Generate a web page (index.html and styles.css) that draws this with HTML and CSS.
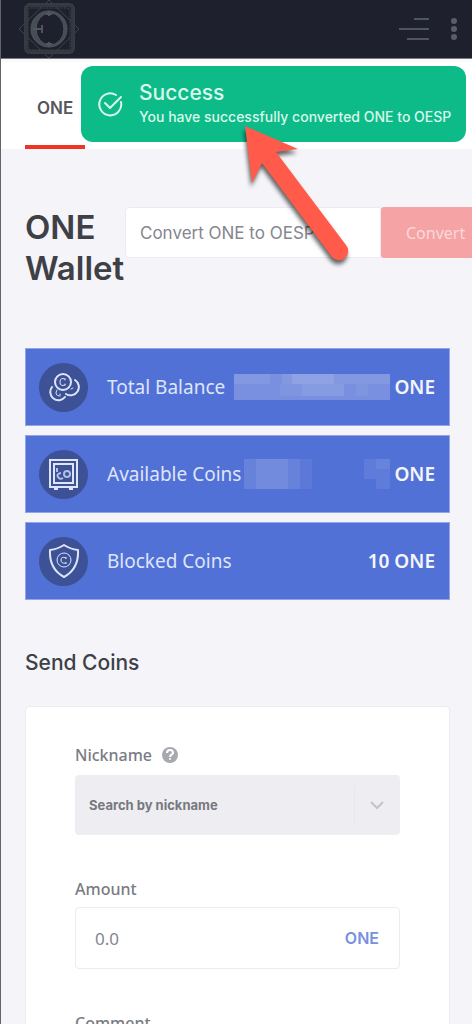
FILE: index.html
```html
<!DOCTYPE html>
<html lang="en">
<head>
  <meta charset="UTF-8">
  <meta name="viewport" content="width=device-width, initial-scale=1">
  <title>ONE Wallet</title>
  <link rel="stylesheet" href="styles.css">
</head>
<body>
  <header class="topbar">
    <a href="#" class="logo" aria-label="Home">
      <svg width="60" height="58" viewBox="0 0 60 58" fill="none" stroke="#3f444b">
        <path d="M30 0 60 29 30 58 0 29Z"/>
        <rect x="7" y="5" width="47" height="47" rx="4" stroke="#33373f" stroke-width="4"/>
        <rect x="6" y="4" width="49" height="49" rx="4" stroke-dasharray="2 1"/>
        <rect x="9" y="8" width="42" height="42" rx="3" stroke-dasharray="2 1"/>
        <path d="M30 11a18 18 0 0 0 0 36 18 18 0 0 0 0-36zM31 13a14 16 0 0 1 0 32 14 16 0 0 1 0-32z" fill="#474d54" fill-rule="evenodd" stroke="#50565d"/>
        <path d="M14 29h10M23 25v8M30 11v5M27 14h6M30 42v5M27 44h6" stroke="#50565d" stroke-width="2"/>
      </svg>
    </a>
    <nav class="top-actions">
      <button class="icon-btn" aria-label="Menu">
        <svg width="30" height="24" viewBox="0 0 30 24" stroke="#50545f" stroke-width="2">
          <path d="M15 2h15M0 12h30M8 22h22"/>
        </svg>
      </button>
      <button class="icon-btn" aria-label="More">
        <svg width="6" height="24" viewBox="0 0 6 24" fill="#5b5e68">
          <circle cx="3" cy="4" r="3"/><circle cx="3" cy="12" r="3"/><circle cx="3" cy="20" r="3"/>
        </svg>
      </button>
    </nav>
  </header>

  <nav class="tabs">
    <a href="#" class="tab active">ONE</a>
  </nav>

  <div class="toast" role="status">
    <svg width="26" height="26" viewBox="0 0 26 26" fill="none" stroke="#d9f7ea" stroke-width="2" stroke-linecap="round" stroke-linejoin="round">
      <path d="M24 11A11 11 0 1 1 19 4"/>
      <path d="M8 12l5 5L24 6"/>
    </svg>
    <div>
      <div class="toast-title">Success</div>
      <div class="toast-text">You have successfully converted ONE to OESP</div>
    </div>
  </div>

  <!-- pointer to the message -->
  <svg class="pointer" width="120" height="150" viewBox="240 120 120 150">
    <path d="M245 126 298 149 276 152 346 245A9 9 0 0 1 332 257L262 163 252 183Z" fill="#ff5a4a"/>
  </svg>

  <main class="content">
    <div class="wallet-head">
      <h1>ONE Wallet</h1>
      <form class="convert">
        <input type="text" aria-label="Convert ONE to OESP" placeholder="Convert ONE to OESP">
        <button type="button">Convert</button>
      </form>
    </div>

    <section class="balances">
      <div class="balance">
        <span class="badge">
          <svg width="32" height="32" viewBox="0 0 32 32" fill="none" stroke="#dfe5f8" stroke-width="2" stroke-linecap="round">
            <circle cx="15" cy="11" r="8"/>
            <path d="M4 16a8 8 0 1 0 13 10M27 9a8 8 0 1 1-9 14"/>
            <path d="M17 8q-5-2-5 3t5 3M17 8v1M17 13v1" stroke-width="1"/>
            <path d="M9 19q-3 5 2 6M12 23v2M23 18l2-1" stroke-width="1"/>
          </svg>
        </span>
        <span class="label">Total Balance</span>
        <svg class="masked" width="156" height="26" viewBox="0 0 156 26" fill="#fff" shape-rendering="crispEdges">
          <path d="M0 0h156v26H0z" opacity=".22"/>
          <path d="M0 0h36v10H0zM48 0h108v10H48z" opacity=".08"/>
          <path d="M58 0h42v10H58z" opacity=".1"/>
          <path d="M68 10h42v12H68z" opacity=".1"/>
          <path d="M46 10h22v12H46zM122 10h12v12h-12z" opacity=".05"/>
        </svg>
        <span class="value">ONE</span>
      </div>
      <div class="balance">
        <span class="badge">
          <svg width="32" height="32" viewBox="0 0 32 32" fill="none" stroke="#dfe5f8">
            <rect x="2" y="2" width="27" height="27" stroke-width="2"/>
            <rect x="6" y="6" width="19" height="19" stroke-width="2"/>
            <circle cx="19" cy="16" r="3" stroke="#b4bfe2" stroke-width="2"/>
            <path d="M13 15q-5 1-3 4 2 3 5 1M9 10v4" stroke="#b4bfe2" stroke-width="2"/>
            <path d="M6 31h4M21 31h4" stroke-width="3"/>
          </svg>
        </span>
        <span class="label">Available Coins</span>
        <svg class="masked" width="146" height="30" viewBox="0 0 146 30" fill="#fff" shape-rendering="crispEdges">
          <path d="M0 0h56v30H0z" opacity=".12"/>
          <path d="M12 0h32v30H12z" opacity=".08"/>
          <path d="M56 0h12v30H56z" opacity=".06"/>
          <path d="M120 0h26v20h-26zM132 20h14v10h-14z" opacity=".08"/>
          <path d="M132 0h14v10h-14z" opacity=".06"/>
        </svg>
        <span class="value">ONE</span>
      </div>
      <div class="balance">
        <span class="badge">
          <svg width="32" height="36" viewBox="0 0 32 36" fill="none" stroke="#dfe5f8" stroke-width="2" stroke-linejoin="round">
            <path d="M16 2Q22 6 30 7 31 26 16 34 1 26 2 7 10 6 16 2Z"/>
            <circle cx="16" cy="17" r="7" stroke-width="1"/>
            <path d="M18 15q-5-2-5 2t5 3M18 14v2M18 19v2" stroke-width="1"/>
          </svg>
        </span>
        <span class="label">Blocked Coins</span>
        <span class="value">10 ONE</span>
      </div>
    </section>

    <h2>Send Coins</h2>

    <form class="card">
      <div class="field">
        <div class="field-label">
          <label for="nickname">Nickname</label>
          <svg width="16" height="16" viewBox="0 0 16 16">
            <circle cx="8" cy="8" r="8" fill="#a7a8b0"/>
            <path d="M5 6q0-3 3-3t3 3q0 1-2 2-1 1-1 2" fill="none" stroke="#fff" stroke-width="2"/>
            <circle cx="8" cy="12" r="1" fill="#fff"/>
          </svg>
        </div>
        <div class="select-box">
          <select id="nickname">
            <option>Search by nickname</option>
          </select>
          <svg class="chevron" width="14" height="10" viewBox="0 0 14 10" fill="none" stroke="#c3c4ca" stroke-width="2">
            <path d="M1 2l6 6 6-6"/>
          </svg>
        </div>
      </div>

      <div class="field">
        <div class="field-label"><label for="amount">Amount</label></div>
        <div class="amount-box">
          <input type="text" id="amount" placeholder="0.0">
          <span class="unit">ONE</span>
        </div>
      </div>

      <div class="field">
        <div class="field-label"><label for="comment">Comment</label></div>
        <textarea id="comment" rows="3"></textarea>
      </div>
    </form>
  </main>
</body>
</html>
```
FILE: styles.css
```css
* {
  box-sizing: border-box;
}

body {
  margin: 0;
  height: 100vh;
  overflow: hidden;
  position: relative;
  border-left: 1px solid #62636b;
  background: #f4f4f9;
  color: #3e4046;
  font-family: Inter, sans-serif;
}

svg {
  display: block;
  flex: none;
}

input, select, button, textarea {
  font-family: inherit;
  border: none;
  outline: none;
}

.topbar {
  display: flex;
  justify-content: space-between;
  align-items: center;
  height: 59px;
  padding: 0 15px 0 18px;
  background: #1e212d;
  border-bottom: 1px solid #7b7d84;
}

.top-actions {
  display: flex;
  gap: 22px;
}

.icon-btn {
  padding: 0;
  background: none;
  cursor: pointer;
}

.tabs {
  display: flex;
  height: 90px;
  padding: 0 24px;
  background: #fff;
  border-top: 3px solid #fafafb;
}

.tab {
  display: flex;
  align-items: center;
  padding: 8px 12px 0;
  border-bottom: 4px solid #ee3524;
  color: #55565e;
  font-size: 17px;
  font-weight: 600;
  text-decoration: none;
}

.toast {
  position: absolute;
  top: 66px;
  left: 80px;
  right: 6px;
  display: flex;
  align-items: center;
  gap: 16px;
  height: 76px;
  padding: 0 8px 0 16px;
  border-radius: 12px;
  background: #0dbb89;
  color: #d9f7ea;
  white-space: nowrap;
}

.toast-title {
  font-size: 21px;
  font-weight: 500;
  line-height: 26px;
}

.toast-text {
  font-size: 14px;
  font-weight: 500;
  line-height: 22px;
}

.pointer {
  position: absolute;
  top: 120px;
  left: 239px;
  z-index: 2;
  filter: drop-shadow(-1px 4px 2px rgba(0, 0, 0, 0.6));
}

.content {
  padding: 58px 22px 0 24px;
}

.wallet-head {
  display: flex;
  align-items: flex-start;
  height: 141px;
}

h1 {
  flex: none;
  width: 100px;
  margin: 0;
  font-size: 33px;
  font-weight: 600;
  line-height: 41px;
}

.convert {
  display: flex;
  flex: none;
}

.convert input {
  width: 256px;
  height: 51px;
  padding: 0 14px;
  border: 1px solid #ebebf2;
  border-radius: 4px 0 0 4px;
  background: #fff;
  font-size: 17px;
}

.convert button {
  width: 110px;
  padding: 0 0 0 25px;
  border-radius: 3px;
  background: #f5a3a4;
  color: #fbd9dc;
  font-family: "Noto Sans", sans-serif;
  font-size: 16px;
  text-align: left;
}

input::placeholder {
  color: #85868e;
  opacity: 1;
}

.balances {
  display: flex;
  flex-direction: column;
  gap: 9px;
}

.balance {
  display: flex;
  align-items: center;
  height: 78px;
  padding: 0 14px 0 13px;
  border: 1px solid #92a5e8;
  background: #5271d7;
  color: #dfe5f8;
  font-family: "Noto Sans", sans-serif;
  font-size: 19px;
  white-space: nowrap;
}

.badge {
  display: flex;
  flex: none;
  align-items: center;
  justify-content: center;
  width: 49px;
  height: 49px;
  margin-right: 19px;
  border-radius: 50%;
  background: #3c5196;
}

.masked {
  margin-left: auto;
}

.value {
  margin-left: auto;
  color: #f4f6fd;
  font-weight: 600;
}

.masked + .value {
  margin-left: 4px;
}

h2 {
  margin: 49px 0 30px;
  font-size: 21px;
  font-weight: 500;
  line-height: 27px;
}

.card {
  display: flex;
  flex-direction: column;
  gap: 43px;
  padding: 37px 49px;
  border: 1px solid #ebebf0;
  border-radius: 4px;
  background: #fff;
}

.field-label {
  display: flex;
  align-items: center;
  gap: 10px;
  height: 22px;
  margin-bottom: 7px;
  color: #7a7b83;
  font-family: "Noto Sans", sans-serif;
  font-size: 16px;
  font-weight: 500;
}

.select-box {
  position: relative;
  margin-top: 9px;
}

select {
  display: block;
  width: 100%;
  height: 60px;
  padding: 0 46px 0 14px;
  appearance: none;
  border-radius: 4px;
  background: #eeeef2;
  color: #77787f;
  font-size: 13px;
  font-weight: 700;
}

.select-box::after {
  content: "";
  position: absolute;
  top: 10px;
  bottom: 10px;
  right: 45px;
  width: 1px;
  background: #e8e8ea;
}

.chevron {
  position: absolute;
  top: 25px;
  right: 16px;
}

.amount-box {
  display: flex;
  align-items: center;
  height: 62px;
  padding: 0 20px 0 19px;
  border: 1px solid #ebebf3;
  border-radius: 4px;
}

.amount-box input {
  flex: 1;
  min-width: 0;
  padding: 0;
  font-family: "Noto Sans", sans-serif;
  font-size: 17px;
}

.unit {
  color: #7790e2;
  font-size: 16px;
  font-weight: 600;
}

textarea {
  display: block;
  width: 100%;
  border: 1px solid #ebebf3;
  border-radius: 4px;
}
```
